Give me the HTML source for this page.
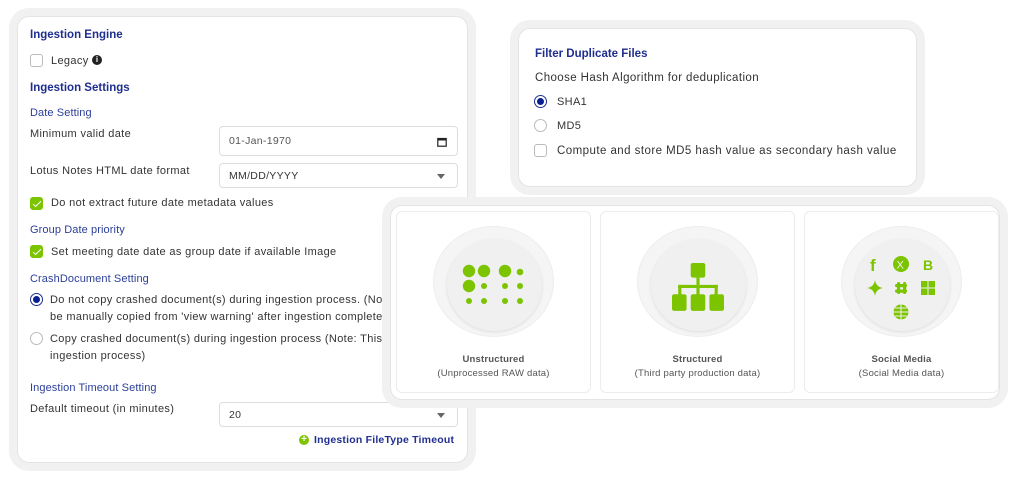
<!DOCTYPE html>
<html><head><meta charset="utf-8"><style>
*{box-sizing:border-box;margin:0;padding:0}
body{width:1024px;height:481px;background:#fff;font-family:"Liberation Sans",sans-serif;position:relative;overflow:hidden;color:#333}
.card{position:absolute;background:#fff;border-radius:12px;border:1px solid #e4e4e4;box-shadow:0 0 0 8px #f1f1f1,0 2px 6px rgba(0,0,0,.08)}
.abs{position:absolute;white-space:nowrap}
.h{color:#1f2f8f;font-weight:bold;font-size:11.5px}
.sh{color:#2b3f9a;font-size:11px;letter-spacing:.1px}
.t{font-size:11px;color:#333;letter-spacing:.35px}
.cb{position:absolute;width:13px;height:13px;border:1px solid #bbb;border-radius:3px;background:#fff}
.cb.on{background:#7cc400;border-color:#7cc400}
.cb.on:after{content:"";position:absolute;left:4px;top:1px;width:3px;height:7px;border:solid #fff;border-width:0 1.5px 1.5px 0;transform:rotate(45deg)}
.rd{position:absolute;width:13px;height:13px;border:1px solid #bbb;border-radius:50%;background:#fff}
.rd.on{border-color:#1f2f8f}
.rd.on:after{content:"";position:absolute;left:2px;top:2px;width:7px;height:7px;border-radius:50%;background:#0a1f8f}
.inp{position:absolute;border:1px solid #ddd;border-radius:4px;background:#fff;font-size:10.5px;padding-left:9px;display:flex;align-items:center;letter-spacing:.3px}
.caret{position:absolute;right:12px;top:50%;margin-top:-2px;border:4px solid transparent;border-top:5px solid #666;border-bottom:0}
.sub{position:absolute;top:5px;width:195px;height:182px;border:1px solid #ececec;border-radius:6px;background:#fff}
.circ{position:absolute;left:36px;top:14px;width:121px;height:111px;border-radius:50%;background:#f5f5f5;border:1px solid #ededed}
.circ .in{position:absolute;left:13px;top:12px;width:95px;height:92px;border-radius:50%;background:#f0f0f0;box-shadow:0 1px 3px rgba(0,0,0,.1)}
.ic{position:absolute;left:0;top:0}
.lbl{position:absolute;left:0;width:100%;text-align:center;font-size:9.5px;color:#555;letter-spacing:.2px}
</style></head><body>

<div class="card" style="left:17px;top:16px;width:451px;height:447px"></div>
<div class="abs h" style="left:30px;top:29px">Ingestion Engine</div>
<div class="cb" style="left:30px;top:54px"></div>
<div class="abs t" style="left:51px;top:55px">Legacy</div>
<div class="abs" style="left:92px;top:55px;width:10px;height:10px;border-radius:50%;background:#222;color:#fff;font-size:8px;text-align:center;line-height:10px;font-weight:bold">i</div>
<div class="abs h" style="left:30px;top:82px">Ingestion Settings</div>
<div class="abs sh" style="left:30px;top:107px">Date Setting</div>
<div class="abs t" style="left:30px;top:128px">Minimum valid date</div>
<div class="inp" style="left:219px;top:126px;width:239px;height:30px;color:#555;padding-left:9px">01-Jan-1970
<svg style="position:absolute;right:10px;top:10px" width="10" height="10" viewBox="0 0 10 10"><rect x="0.8" y="1.5" width="8.4" height="7.7" fill="none" stroke="#222" stroke-width="1.2"/><rect x="0.8" y="1.5" width="8.4" height="2" fill="#222"/></svg></div>
<div class="abs t" style="left:30px;top:165px">Lotus Notes HTML date format</div>
<div class="inp" style="left:219px;top:163px;width:239px;height:25px">MM/DD/YYYY<span class="caret"></span></div>
<div class="cb on" style="left:30px;top:197px"></div>
<div class="abs t" style="left:51px;top:197px">Do not extract future date metadata values</div>
<div class="abs sh" style="left:30px;top:224px">Group Date priority</div>
<div class="cb on" style="left:30px;top:245px"></div>
<div class="abs t" style="left:51px;top:246px">Set meeting date date as group date if available Image</div>
<div class="abs sh" style="left:30px;top:273px">CrashDocument Setting</div>
<div class="rd on" style="left:30px;top:293px"></div>
<div class="abs t" style="left:50px;top:294px">Do not copy crashed document(s) during ingestion process. (Note</div>
<div class="abs t" style="left:50px;top:311px">be manually copied from 'view warning' after ingestion complete)</div>
<div class="rd" style="left:30px;top:332px"></div>
<div class="abs t" style="left:50px;top:333px">Copy crashed document(s) during ingestion process (Note: This m</div>
<div class="abs t" style="left:50px;top:350px">ingestion process)</div>
<div class="abs sh" style="left:30px;top:382px">Ingestion Timeout Setting</div>
<div class="abs t" style="left:30px;top:403px">Default timeout (in minutes)</div>
<div class="inp" style="left:219px;top:402px;width:239px;height:25px">20<span class="caret"></span></div>
<div class="abs" style="left:299px;top:435px;width:10px;height:10px;border-radius:50%;background:#7cc400;color:#fff;font-size:10px;line-height:10px;text-align:center;font-weight:bold">+</div>
<div class="abs h" style="left:314px;top:434px;font-size:10.5px;letter-spacing:.2px">Ingestion FileType Timeout</div>

<div class="card" style="left:518px;top:28px;width:399px;height:159px"></div>
<div class="abs h" style="left:535px;top:48px">Filter Duplicate Files</div>
<div class="abs t" style="left:535px;top:72px;font-size:11.5px;letter-spacing:.4px">Choose Hash Algorithm for deduplication</div>
<div class="rd on" style="left:534px;top:95px"></div>
<div class="abs t" style="left:557px;top:96px">SHA1</div>
<div class="rd" style="left:534px;top:119px"></div>
<div class="abs t" style="left:557px;top:120px">MD5</div>
<div class="cb" style="left:534px;top:144px"></div>
<div class="abs t" style="left:557px;top:145px;font-size:11.5px;letter-spacing:.45px">Compute and store MD5 hash value as secondary hash value</div>

<div class="card" style="left:390px;top:205px;width:610px;height:195px">
 <div class="sub" style="left:5px">
  <div class="circ"><div class="in"></div></div>
  <svg class="ic" width="195" height="140" viewBox="0 0 195 140" fill="#7cc400">
    <circle cx="72" cy="59" r="6.2"/><circle cx="87" cy="59" r="6.2"/><circle cx="108" cy="59" r="6.2"/><circle cx="123" cy="60" r="3.3"/>
    <circle cx="72" cy="74" r="6.2"/><circle cx="87" cy="74" r="3"/><circle cx="108" cy="74" r="3"/><circle cx="123" cy="74" r="3"/>
    <circle cx="72" cy="89" r="3"/><circle cx="87" cy="89" r="3"/><circle cx="108" cy="89" r="3"/><circle cx="123" cy="89" r="3"/>
  </svg>
  <div class="lbl" style="top:142px;font-weight:bold">Unstructured</div>
  <div class="lbl" style="top:156px">(Unprocessed RAW data)</div>
 </div>
 <div class="sub" style="left:209px">
  <div class="circ"><div class="in"></div></div>
  <svg class="ic" style="left:71px;top:50px" width="52" height="52" viewBox="0 0 50 48" fill="#7cc400">
    <rect x="18" y="0" width="14" height="14" rx="2"/><rect x="23.5" y="14" width="3" height="9"/><rect x="6" y="21" width="38" height="3"/><rect x="6" y="21" width="3" height="10"/><rect x="41" y="21" width="3" height="10"/><rect x="23.5" y="21" width="3" height="10"/>
    <rect x="0" y="30" width="14" height="16" rx="2"/><rect x="18" y="30" width="14" height="16" rx="2"/><rect x="36" y="30" width="14" height="16" rx="2"/>
  </svg>
  <div class="lbl" style="top:142px;font-weight:bold">Structured</div>
  <div class="lbl" style="top:156px">(Third party production data)</div>
 </div>
 <div class="sub" style="left:413px">
  <div class="circ"><div class="in"></div></div>
  <svg class="ic" width="195" height="140" viewBox="0 0 195 140" fill="#7cc400">
    <text x="65" y="59" font-family="Liberation Sans" font-weight="bold" font-size="17" fill="#7cc400">f</text>
    <circle cx="96" cy="52" r="8"/><text x="91.5" y="56.5" font-family="Liberation Sans" font-size="11" fill="#f0f0f0">X</text>
    <text x="118" y="58" font-family="Liberation Sans" font-weight="bold" font-size="14" fill="#7cc400">B</text>
    <path d="M70 68 Q71 75 78 76 Q71 77 70 84 Q69 77 62 76 Q69 75 70 68Z"/>
    <rect x="92" y="70" width="3.2" height="12" rx="1.6"/><rect x="98" y="70" width="3.2" height="12" rx="1.6"/><rect x="90" y="72" width="12" height="3.2" rx="1.6"/><rect x="90" y="77.5" width="12" height="3.2" rx="1.6"/>
    <rect x="116" y="69" width="6.5" height="6.5"/><rect x="123.5" y="69" width="6.5" height="6.5"/><rect x="116" y="76.5" width="6.5" height="6.5"/><rect x="123.5" y="76.5" width="6.5" height="6.5"/>
    <circle cx="96" cy="100" r="7.5"/><path d="M88.5 100h15M96 92.5v15M90 96h12M90 104h12" stroke="#f0f0f0" stroke-width="1" fill="none"/>
  </svg>
  <div class="lbl" style="top:142px;font-weight:bold">Social Media</div>
  <div class="lbl" style="top:156px">(Social Media data)</div>
 </div>
</div>
</body></html>
